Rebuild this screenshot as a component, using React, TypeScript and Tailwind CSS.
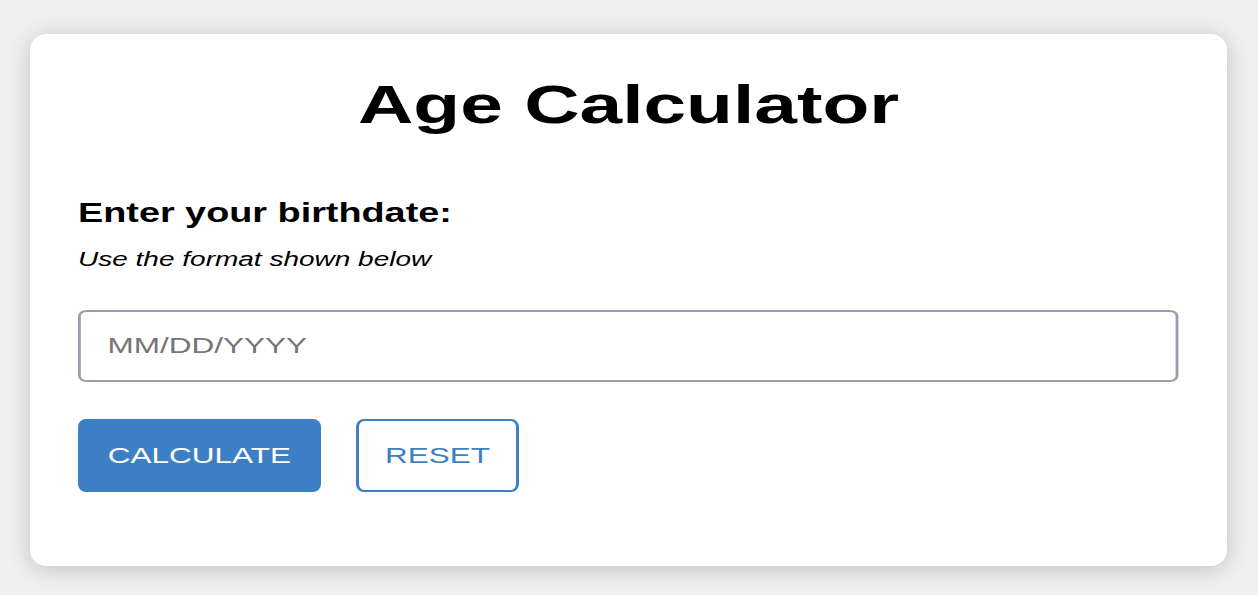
import React, { useState } from 'react';

const font = { fontFamily: '"Liberation Sans", Arial, Helvetica, sans-serif' };

export default function App() {
  const [birthdate, setBirthdate] = useState('');
  const [age, setAge] = useState<number | null>(null);

  const handleCalculate = () => {
    const d = new Date(birthdate);
    if (isNaN(d.getTime())) {
      setAge(null);
      return;
    }
    const now = new Date();
    let years = now.getFullYear() - d.getFullYear();
    const m = now.getMonth() - d.getMonth();
    if (m < 0 || (m === 0 && now.getDate() < d.getDate())) years--;
    setAge(years);
  };

  const handleReset = () => {
    setBirthdate('');
    setAge(null);
  };

  return (
    <div className="min-h-[595px] w-full bg-[#f0f0f0] pt-[34px] pb-[29px]" style={font}>
      <div className="ml-[30px] mr-[31px] rounded-2xl bg-white px-12 pt-10 pb-[74px] shadow-[0_3px_22px_rgba(0,0,0,0.2)]">
        {/* title */}
        <h1 className="text-center text-[54px] font-bold leading-[60px] text-black">
          <span className="inline-block origin-center scale-x-[1.42]">Age Calculator</span>
        </h1>

        <h2 className="mt-[63px] text-[27px] font-bold leading-[32px] text-black">
          <span className="inline-block origin-left scale-x-[1.4]">Enter your birthdate:</span>
        </h2>
        <p className="mt-[18px] text-[20px] italic leading-[24px] text-black">
          <span className="inline-block origin-left scale-x-[1.4]">Use the format shown below</span>
        </p>

        {/* input drawn narrow and widened like the rest of the text */}
        <input
          type="text"
          value={birthdate}
          onChange={(e) => setBirthdate(e.target.value)}
          placeholder="MM/DD/YYYY"
          className="mt-[39px] block h-[72px] w-[786px] origin-left scale-x-[1.4] rounded-[6px] border-x-2 border-y-[2.5px] border-[#9f9caf] bg-white pl-[19px] text-[22.5px] text-black outline-none placeholder:text-[#757575]"
          style={font}
        />

        <div className="mt-[37px] flex gap-[35px]">
          <button
            onClick={handleCalculate}
            className="flex h-[73px] w-[243px] items-center justify-center rounded-lg bg-[#3d7fc4] text-[22.5px] text-white"
            style={font}
          >
            <span className="inline-block scale-x-[1.4]">CALCULATE</span>
          </button>
          <button
            onClick={handleReset}
            className="flex h-[73px] w-[163px] items-center justify-center rounded-lg border-x-[3px] border-y-[2.5px] border-[#3d7fc4] bg-white text-[22.5px] text-[#3d7fc4]"
            style={font}
          >
            <span className="inline-block scale-x-[1.4]">RESET</span>
          </button>
        </div>

        {age !== null && <p className="sr-only">You are {age} years old.</p>}
      </div>
    </div>
  );
}
